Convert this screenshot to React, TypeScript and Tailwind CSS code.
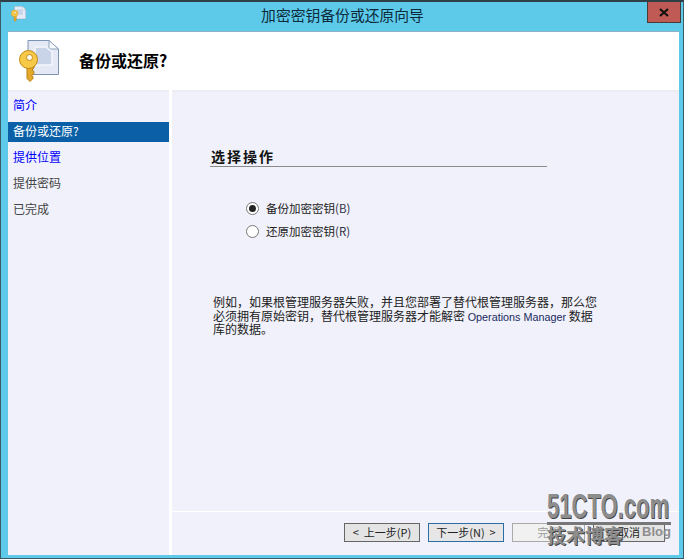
function Key({ size }: { size: number }) {
  return (
    <svg width={size} height={(size * 42) / 40} viewBox="0 0 40 42" className="block">
      <path d="M9 .5H30L39.5 9V34.5H9Z" fill="#e4e9f5" stroke="#7d93b4" strokeWidth="1" />
      <path d="M30 .5V9H39.5Z" fill="#f7f9fd" stroke="#8ea2bf" strokeWidth="1" />
      <path d="M16 7H27L33 12V25H16Z" fill="#c9d4e8" stroke="#f4f6fb" strokeWidth="1.5" />
      <path d="M8 25V38.5L11 41.5L14 38.5V36.5L12.5 35.5L15 33.5V31.5L13 30L15 28V25Z" fill="#e4a92a" stroke="#b97f12" strokeWidth="1" />
      <circle cx="9.5" cy="19.5" r="9" fill="#f7c948" stroke="#c28a14" strokeWidth="1" />
      <circle cx="10.5" cy="17.5" r="3" fill="#fffdf5" stroke="#c28a14" strokeWidth="1" />
    </svg>
  );
}
function Btn({ children, w, cls = "" }: { children: React.ReactNode; w: string; cls?: string }) {
  return (
    <div className={`${w} h-[19px] border flex items-center justify-center text-[11px] leading-none ${cls}`}>{children}</div>
  );
}
export default function App() {
  return (
    <div className="relative w-[684px] h-[559px] overflow-hidden bg-[#5dcaea] border border-[#3c5a66] border-t-2 border-t-[#2f3f46] flex flex-col text-[12px] text-[#222]">
      <div className="h-[29px] shrink-0 relative flex items-center justify-center font-['Noto_Sans_CJK_SC',sans-serif]">
        <div className="absolute left-[10px] top-[4px]"><Key size={15} /></div>
        <span className="text-[14.8px] leading-[20px] text-[#0d2a3a] mb-[4px] ml-[1px]">加密密钥备份或还原向导</span>
        <div className="absolute right-[2px] top-[-1px] w-[34px] h-[22px] bg-[#c05a54] border border-[#4a3a38] flex items-center justify-center">
          <svg width="10" height="9" viewBox="0 0 10 9"><path d="M1 1L9 8M9 1L1 8" stroke="#111" strokeWidth="2.2" /></svg>
        </div>
      </div>
      <div className="flex-1 ml-[7px] mr-[4px] mb-[3px] flex flex-col min-h-0 font-['Noto_Sans_CJK_SC',sans-serif]">
        <div className="h-[59px] shrink-0 bg-white border-t border-[#8fb0c0] flex items-center pl-[11px]">
          <Key size={40} />
          <span className="ml-[20px] text-[16px] font-bold text-black mb-[2px]">备份或还原?</span>
        </div>
        <div className="flex-1 flex min-h-0 bg-white">
          <div className="w-[161px] shrink-0 bg-[#f0f1fa] border-t-2 border-[#ececf2]">
            <div className="h-[30px] pb-[4px] pl-[5px] flex items-center text-[#0000ff]">简介</div>
            <div className="h-[20px] pb-[2px] pl-[5px] flex items-center text-white bg-[#0a5fa6]">备份或还原?</div>
            <div className="h-[30px] pl-[5px] flex items-center text-[#0000ff]">提供位置</div>
            <div className="h-[22px] pl-[5px] flex items-center text-[#444]">提供密码</div>
            <div className="h-[30px] pl-[5px] flex items-center text-[#444]">已完成</div>
          </div>
          <div className="w-[3px] shrink-0 bg-white" />
          <div className="flex-1 bg-[#f0f1fa] border-t-2 border-[#ececf2] flex flex-col min-w-0">
            <div className="flex-1 relative pl-[38px] pt-[55px] min-h-0">
              <div className="w-[337px] h-[20px] pl-[1px] border-b border-[#8a8a8a] text-[14px] font-bold text-[#111] leading-[18px] tracking-[2px]">选择操作</div>
              <div className="ml-[36px] mt-[33px] flex flex-col gap-[6px] text-[#222]">
                <label className="h-[17px] flex items-center gap-[7px]">
                  <span className="w-[13px] h-[13px] rounded-full border border-[#777] bg-white flex items-center justify-center"><span className="w-[7px] h-[7px] rounded-full bg-[#222]" /></span>
                  <span className="text-[11.5px]">备份加密密钥<span className="text-[#334]">(B)</span></span>
                </label>
                <label className="h-[17px] flex items-center gap-[7px]">
                  <span className="w-[13px] h-[13px] rounded-full border border-[#777] bg-white" />
                  <span className="text-[11.5px]">还原加密密钥<span className="text-[#334]">(R)</span></span>
                </label>
              </div>
              <p className="ml-[3px] mt-[55px] leading-[13.5px] text-[#222] whitespace-nowrap">
                例如，如果根管理服务器失败，并且您部署了替代根管理服务器，那么您<br />
                必须拥有原始密钥，替代根管理服务器才能解密 <span className="text-[10.8px] leading-none text-[#1a2a60] font-['Liberation_Sans',sans-serif]">Operations Manager</span> 数据<br />
                库的数据。
              </p>
            </div>
            <div className="h-[44px] shrink-0 border-t border-white flex items-start gap-[8px] pl-[172px] pt-[11px] text-[#222]">
              <Btn w="w-[76px]" cls="border-[#666] bg-[#e4e4e4] gap-[2px]">&lt;&nbsp;&nbsp;上一步(P)</Btn>
              <Btn w="w-[76px]" cls="border-[#2a6ea5] bg-[#e6e6e6]">下一步(N)&nbsp;&nbsp;&gt;</Btn>
              <Btn w="w-[73px]" cls="border-[#aaa] bg-[#f1f1f1] text-[#999]">完成</Btn>
              <Btn w="w-[72px]" cls="border-[#666] bg-[#e4e4e4]">取消</Btn>
            </div>
          </div>
        </div>
      </div>
      <div className="absolute left-[546px] top-[487px] w-[125px] text-[#8d8d8d]">
        <div className="text-[35px] leading-[33px] font-bold font-['Liberation_Sans',sans-serif] [text-shadow:1px_1px_0_#444] whitespace-nowrap scale-x-[0.63] origin-left">51CTO.com</div>
        <div className="h-[3px] w-[124px] bg-[#777]" />
      </div>
      <div className="absolute left-[546px] top-[520px] text-[19px] leading-[26px] font-bold text-[#8d8d8d] [text-shadow:1px_1px_0_#444] font-['Noto_Sans_CJK_SC',sans-serif] whitespace-nowrap">技术博客</div>
      <div className="absolute left-[641px] top-[522px] text-[13px] leading-[16px] font-bold text-[#8d8d8d] font-['Liberation_Sans',sans-serif]">Blog</div>
    </div>
  );
}
